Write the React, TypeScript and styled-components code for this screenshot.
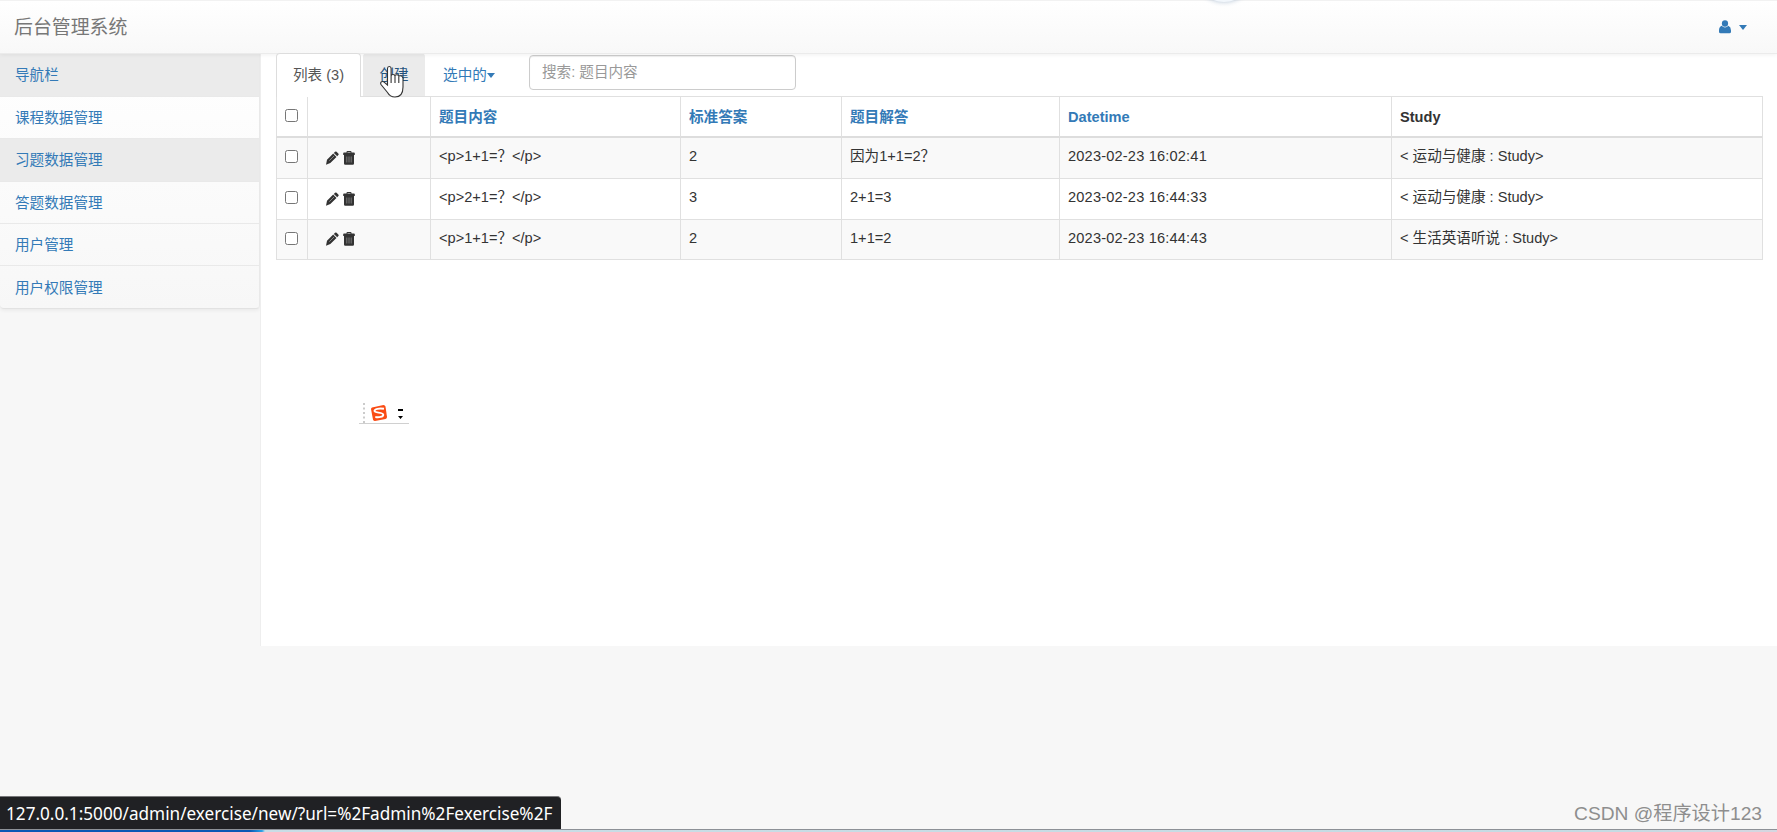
import React from "react";
import styled, { createGlobalStyle } from "styled-components";

const sans = '"Liberation Sans", "Noto Sans CJK SC", sans-serif';

const GlobalStyle = createGlobalStyle`
  * { box-sizing: border-box; }
  body { margin: 0; background: #f7f7f7; color: #333; font: 14.6px/21px ${sans}; overflow: hidden; }
`;

const Page = styled.div`
  position: relative;
  display: flex;
  flex-direction: column;
  height: 832px;
  overflow: hidden;
`;

const Header = styled.header`
  position: relative;
  z-index: 1;
  display: flex;
  align-items: center;
  justify-content: space-between;
  height: 54px;
  flex: none;
  padding: 0 30px 0 14px;
  border-top: 1px solid #f2f2f2;
  border-bottom: 1px solid #ebebeb;
  background: linear-gradient(#fff, #f8f8f8);
  box-shadow: 0 1px 4px rgba(0, 0, 0, 0.06);
`;

const Brand = styled.div`
  padding-top: 2px;
  font-size: 18.9px;
  line-height: 28px;
  color: #777;
`;

const UserMenu = styled.div`
  display: flex;
  align-items: center;
  gap: 8px;
  color: #337ab7;
`;

const Caret = styled.span`
  width: 0;
  height: 0;
  border: 4px solid transparent;
  border-top: 5px solid #337ab7;
  border-bottom: 0;
`;

const Body = styled.div`
  display: flex;
  height: 592px;
  flex: none;
`;

const Sidebar = styled.nav`
  width: 260px;
  flex: none;
`;

const NavList = styled.div`
  margin-top: -1px;
  height: 256px;
  border-right: 1px solid #e9e9e9;
  border-bottom: 1px solid #e2e2e2;
  border-radius: 0 0 4px 4px;
  background: linear-gradient(#fff, #f7f7f7);
  box-shadow: 0 1px 4px rgba(0, 0, 0, 0.07);
`;

const NavItem = styled.div<{ $active?: boolean; $height?: number }>`
  display: flex;
  align-items: center;
  height: ${(p) => p.$height ?? 42.3}px;
  padding: 2px 15px 0;
  border-bottom: 1px solid #e9e9e9;
  color: #337ab7;
  background: ${(p) => (p.$active ? "#ebebeb" : "transparent")};
  &:last-child { border-bottom: 0; }
`;

const Main = styled.main`
  flex: 1;
  padding: 0 15px;
  border-left: 1px solid #eee;
  background: #fff;
`;

const Tabs = styled.div`
  display: flex;
  height: 42px;
`;

const Tab = styled.div<{ $kind?: "active" | "hover"; $width: number }>`
  display: flex;
  align-items: center;
  justify-content: center;
  width: ${(p) => p.$width}px;
  height: 43px;
  margin: -1px 2px 0 0;
  border: 1px solid transparent;
  border-bottom: 0;
  border-radius: 4px 4px 0 0;
  color: ${(p) => (p.$kind === "active" ? "#555" : "#337ab7")};
  ${(p) => p.$kind === "active" && "height: 44px; border-color: #ddd; background: #fff; z-index: 2;"}
  ${(p) => p.$kind === "hover" && "background: #ebebeb; color: #23527c;"}
`;

const Search = styled.input`
  width: 267px;
  height: 35px;
  margin: 1px 0 0 16px;
  padding: 0 12px 2px;
  border: 1px solid #ccc;
  border-radius: 4px;
  box-shadow: inset 0 1px 1px rgba(0, 0, 0, 0.075);
  font: 14.6px/21px ${sans};
  &::placeholder { color: #999; opacity: 1; }
`;

const Table = styled.table`
  width: 1487px;
  table-layout: fixed;
  border-collapse: separate;
  border-spacing: 0;
  border: solid #e0e0e0;
  border-width: 1px 1px 0 0;
`;

const Row = styled.tr<{ $odd?: boolean; $height: number }>`
  height: ${(p) => p.$height}px;
  background: ${(p) => (p.$odd ? "#f9f9f9" : "#fff")};
`;

const HeadCell = styled.th<{ $plain?: boolean }>`
  padding: 2px 8px 0;
  border-left: 1px solid #e0e0e0;
  border-bottom: 2px solid #ddd;
  text-align: left;
  color: ${(p) => (p.$plain ? "#333" : "#337ab7")};
`;

const Cell = styled.td`
  padding: 0 8px 3px;
  border-left: 1px solid #e0e0e0;
  border-bottom: 1px solid #e0e0e0;
  letter-spacing: ${(p: { $wide?: boolean }) => (p.$wide ? "0.18px" : "normal")};
  white-space: nowrap;
`;

const Check = styled.input<{ $head?: boolean }>`
  display: block;
  width: 13px;
  height: 13px;
  margin: ${(p) => (p.$head ? "0 0 4px" : "0")};
`;

const Actions = styled.div`
  display: flex;
  gap: 4px;
  padding: 2px 0 0 10px;
`;

const Pointer = styled.svg`
  position: absolute;
  left: 379px;
  top: 65px;
  z-index: 4;
`;

const ImeBar = styled.div`
  position: absolute;
  left: 359px;
  top: 402px;
  width: 50px;
  height: 22px;
  border-bottom: 1px solid #d0d0d0;
`;

const Bubble = styled.div`
  position: absolute;
  z-index: 3;
  left: 1194px;
  top: -58px;
  width: 60px;
  height: 60px;
  border-radius: 50%;
  background: #f2f7fc;
  box-shadow: 0 0 5px #b4c3d4;
`;

const StatusBar = styled.div`
  position: absolute;
  left: 0;
  top: 796px;
  width: 561px;
  height: 33px;
  padding-left: 6px;
  border-top: 1px solid #77777a;
  border-radius: 0 4px 0 0;
  background: #202124;
  color: #fff;
  font: 17.17px/33px "Noto Sans", sans-serif;
  white-space: nowrap;
`;

const Watermark = styled.div`
  position: absolute;
  right: 15px;
  top: 800px;
  color: #8e8e8e;
  font: 19.2px/28px ${sans};
  white-space: nowrap;
`;

const Taskbar = styled.div`
  position: absolute;
  left: 0;
  right: 0;
  bottom: 0;
  height: 3px;
  border-top: 1px solid #8d9197;
  background: linear-gradient(90deg, #0a58b5 0 250px, #2ba3e8 262px, #c9dde6 265px, #c5dbe3 1620px, #d6d6e0);
`;

const PencilIcon = () => (
  <svg width="13" height="14" viewBox="0 0 13 14" fill="#333">
    <path d="M9 .8q.8-.8 1.600 0l1.700 1.700q.8.8 0 1.600l-1.100 1.100L7.900 1.900zM7.200 2.600l3.300 3.300-6.200 6.200L0 13.700l1-4.900z" />
    <path d="M3.300 9.700l4.900-4.900" stroke="#aaa" strokeWidth=".7" />
  </svg>
);

const TrashIcon = () => (
  <svg width="12" height="14" viewBox="0 0 12 14" fill="#333">
    <path d="M3.500 1.500V1q0-1 1-1h3q1 0 1 1v.5H11q.8 0 .8.8V4H.2V2.300q0-.8.8-.8zM4.500 1.500h3V1h-3zM1 3.800h10v8.700q0 1.200-1.200 1.200H2.200Q1 13.700 1 12.500z" />
    <path d="M3.800 5.500v6M6 5.500v6M8.200 5.500v6" stroke="#999" strokeWidth=".7" />
  </svg>
);

const UserIcon = () => (
  <svg width="12" height="14" viewBox="0 0 12 14" fill="#337ab7">
    <ellipse cx="6" cy="3.500" rx="3.100" ry="3.300" />
    <path d="M2.600 5.800Q6 9 9.400 5.800 12 7 12 10.500v1.200q0 1.600-1.600 1.600H1.600Q0 13.300 0 11.700v-1.200Q0 7 2.600 5.800z" />
  </svg>
);

const nav = [
  { label: "导航栏", active: true, height: 44 },
  { label: "课程数据管理" },
  { label: "习题数据管理", active: true },
  { label: "答题数据管理" },
  { label: "用户管理" },
  { label: "用户权限管理" },
];

const rows = [
  { height: 41, cells: ["<p>1+1=？</p>", "2", "因为1+1=2？", "2023-02-23 16:02:41", "< 运动与健康 : Study>"] },
  { height: 41, cells: ["<p>2+1=？</p>", "3", "2+1=3", "2023-02-23 16:44:33", "< 运动与健康 : Study>"] },
  { height: 40, cells: ["<p>1+1=？</p>", "2", "1+1=2", "2023-02-23 16:44:43", "< 生活英语听说 : Study>"] },
];

const columnWidths = [31, 123, 250, 161, 218, 332, 371];

export default function App() {
  return (
    <Page>
      <GlobalStyle />
      <Header>
        <Brand>后台管理系统</Brand>
        <UserMenu>
          <UserIcon />
          <Caret />
        </UserMenu>
      </Header>
      <Body>
        <Sidebar>
          <NavList>
            {nav.map((item) => (
              <NavItem key={item.label} $active={item.active} $height={item.height}>
                {item.label}
              </NavItem>
            ))}
          </NavList>
        </Sidebar>
        <Main>
          <Tabs>
            <Tab $kind="active" $width={85}>列表 (3)</Tab>
            <Tab $kind="hover" $width={62}>创建</Tab>
            <Tab $width={84}>选中的<Caret /></Tab>
            <Search placeholder="搜索: 题目内容" />
          </Tabs>
          <Table>
            <colgroup>
              {columnWidths.map((w, i) => <col key={i} width={w} />)}
            </colgroup>
            <thead>
              <Row $height={41}>
                <HeadCell><Check $head type="checkbox" /></HeadCell>
                <HeadCell />
                <HeadCell>题目内容</HeadCell>
                <HeadCell>标准答案</HeadCell>
                <HeadCell>题目解答</HeadCell>
                <HeadCell>Datetime</HeadCell>
                <HeadCell $plain>Study</HeadCell>
              </Row>
            </thead>
            <tbody>
              {rows.map((row, i) => (
                <Row key={i} $odd={i % 2 === 0} $height={row.height}>
                  <Cell><Check type="checkbox" /></Cell>
                  <Cell><Actions><PencilIcon /><TrashIcon /></Actions></Cell>
                  {row.cells.map((text, j) => <Cell key={j} $wide={j === 3}>{text}</Cell>)}
                </Row>
              ))}
            </tbody>
          </Table>
        </Main>
      </Body>
      <Bubble />
      <Pointer width="27" height="34" viewBox="0 0 27 34">
        <path d="M8.500 20V3.500q0-2 1.800-2t1.800 2V11q0-1.500 1.900-1.500t1.900 1.500q0-1.200 1.900-1.200t1.900 1.700q0-.8 1.800-.8T24 13v9q0 10-8 10-5 0-7.500-4.500L2 19.500q-1-2 .7-2.800 1.500-.7 3 1z" fill="#fff" stroke="#333" strokeWidth="1.100" />
        <path d="M12.100 11v7M16 11v7M19.800 11.500v6.500" stroke="#333" strokeWidth="1.100" />
      </Pointer>
      <ImeBar>
        <svg width="50" height="21" viewBox="0 0 50 21">
          <path d="M5 1v20" stroke="#bbb" strokeWidth="1.500" strokeDasharray="2 2.500" />
          <path d="M13 5.500L24.500 3q1.500 0 2 1.500L28 15q0 1.500-1.500 2L16 19q-1.500 0-2-1.500L12 7q0-1 1-1.500z" fill="#fa4b14" />
          <path d="M25 6.800C20 6 15.500 7 15.500 9s8.800 1.200 8.800 3.700c0 2.300-4.500 2.800-8 2.300" fill="none" stroke="#fff" strokeWidth="1.900" />
          <path d="M39 7h5v2h-5zM39 14h5l-2.500 3z" fill="#000" />
        </svg>
      </ImeBar>
      <StatusBar>127.0.0.1:5000/admin/exercise/new/?url=%2Fadmin%2Fexercise%2F</StatusBar>
      <Watermark>CSDN @程序设计123</Watermark>
      <Taskbar />
    </Page>
  );
}
